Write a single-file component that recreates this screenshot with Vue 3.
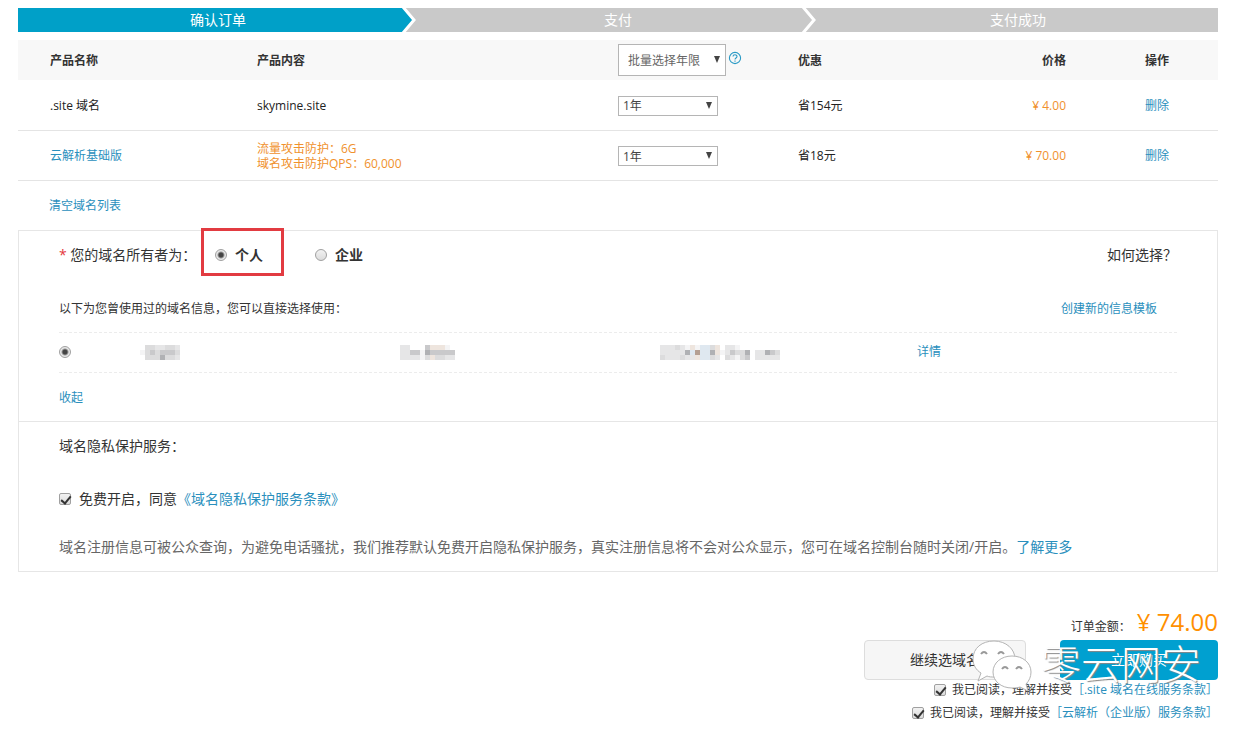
<script setup>
import { ref } from 'vue'

const steps = ['确认订单', '支付', '支付成功']
const rows = [
  { id: 'site', name: '.site 域名', lines: ['skymine.site'], save: '省154元', price: '¥ 4.00' },
  { id: 'dns', name: '云解析基础版', link: true, lines: ['流量攻击防护：6G', '域名攻击防护QPS：60,000'], save: '省18元', price: '¥ 70.00' },
]
const owner = ref('person')
const template = ref('first')
const privacy = ref(true)
const agreements = [
  { id: 'a1', label: '.site 域名在线服务条款' },
  { id: 'a2', label: '云解析（企业版）服务条款' },
]

/* Masked contact fields: rows of 5px cells, each digit picks a tone */
const levels = ['#ffffff', '#f4f4f5', '#e6e6e7', '#dcdcdd', '#c9c9cb', '#b0b1b4', '#a5a6a8', '#eee5de', '#b59f92', '#dfe8f0']
const masks = [
  { id: 'name', label: '姓名', rows: ['03322332', '13434443', '03335332'] },
  { id: 'org', label: '单位', rows: ['22000477710', '22441544444', '22221373322'] },
  { id: 'mail', label: '邮箱', rows: ['222321719937022100000000', '222225989957124335022543', '322232279932032134022222'] },
]
</script>

<template>
  <main class="page">
    <ol class="steps">
      <li v-for="(s, i) in steps" :key="s" :class="{ active: i === 0 }">
        <span>{{ s }}</span>
        <svg v-if="i < 2" class="arrow" width="18" height="24" viewBox="0 0 18 24" aria-hidden="true">
          <path class="arrow-next" d="M0 0H18V24H0Z" />
          <path class="arrow-fill" d="M0 0H4L14 12L4 24H0Z" />
          <path class="arrow-line" d="M3 -1L14 12L3 25" />
        </svg>
      </li>
    </ol>

    <table class="order">
      <colgroup><col class="c1"><col class="c2"><col class="c3"><col class="c4"><col class="c5"><col class="c6"></colgroup>
      <thead>
        <tr>
          <th>产品名称</th>
          <th>产品内容</th>
          <th class="batch-cell">
            <span class="batch">
              <span class="select tall">
                <select aria-label="批量选择年限"><option>批量选择年限</option></select>
              </span>
              <svg class="help" width="14" height="14" viewBox="0 0 14 14" aria-hidden="true">
                <circle cx="7" cy="7" r="5.6" />
                <path d="M5 5.6C5 3.2 9 3.2 9 5.5C9 7 7 7 7 8.6M7 9.6V10.8" />
              </svg>
            </span>
          </th>
          <th>优惠</th>
          <th class="price-col">价格</th>
          <th class="act">操作</th>
        </tr>
      </thead>
      <tbody>
        <tr v-for="r in rows" :key="r.id">
          <td><a v-if="r.link" href="#">{{ r.name }}</a><template v-else>{{ r.name }}</template></td>
          <td :class="{ orange: r.link }"><div v-for="l in r.lines" :key="l" class="line">{{ l }}</div></td>
          <td>
            <span class="select"><select :aria-label="r.name + ' 年限'"><option>1年</option></select></span>
          </td>
          <td>{{ r.save }}</td>
          <td class="price-col orange">{{ r.price }}</td>
          <td class="act"><a href="#">删除</a></td>
        </tr>
      </tbody>
    </table>
    <div class="clear"><a href="#">清空域名列表</a></div>

    <div class="panel">
      <section class="owner">
        <div class="owner-row">
          <span class="owner-label"><i>*</i> 您的域名所有者为：</span>
          <label class="choice marked"><input v-model="owner" type="radio" name="owner" value="person">个人</label>
          <label class="choice"><input v-model="owner" type="radio" name="owner" value="company">企业</label>
          <span class="how">如何选择？</span>
        </div>
        <div class="hint">
          <span>以下为您曾使用过的域名信息，您可以直接选择使用：</span>
          <a href="#">创建新的信息模板</a>
        </div>
        <div class="template">
          <input v-model="template" type="radio" name="template" value="first" aria-label="使用此信息模板">
          <span v-for="m in masks" :key="m.id" class="mask-cell">
            <svg role="img" :aria-label="m.label" :width="m.rows[0].length * 5" height="15" shape-rendering="crispEdges">
              <template v-for="(line, y) in m.rows" :key="y">
                <rect v-for="(c, x) in line.split('')" :key="x" :x="x * 5" :y="y * 5" width="5" height="5" :fill="levels[c]" />
              </template>
            </svg>
          </span>
          <a href="#">详情</a>
        </div>
        <a class="fold" href="#">收起</a>
      </section>
      <section class="privacy">
        <div class="privacy-title">域名隐私保护服务：</div>
        <div class="privacy-check">
          <input id="privacy" v-model="privacy" type="checkbox">
          <label for="privacy">免费开启，同意</label><a href="#">《域名隐私保护服务条款》</a>
        </div>
        <p>域名注册信息可被公众查询，为避免电话骚扰，我们推荐默认免费开启隐私保护服务，真实注册信息将不会对公众显示，您可在域名控制台随时关闭/开启。<a href="#">了解更多</a></p>
      </section>
    </div>

    <footer class="checkout">
      <div class="total"><span>订单金额：</span><strong>¥ 74.00</strong></div>
      <div class="buttons">
        <button type="button" class="more">继续选域名</button>
        <button type="button" class="buy">立即购买</button>
        <div class="watermark">
          <svg width="64" height="54" viewBox="0 0 64 54" aria-hidden="true">
            <path class="bubble" d="M22 2C10 2 1 9 1 20C1 26 4 31 9 34L6 42L15 37C17 38 20 38 22 38C34 38 43 30 43 20C43 10 34 2 22 2Z" />
            <path class="bubble" d="M40 17C29 17 21 24 21 33C21 42 29 49 40 49C43 49 45 49 48 48L56 52L54 45C57 42 59 38 59 33C59 24 51 17 40 17Z" />
            <path class="eye" d="M9 15Q12 11 15 15M26 15Q29 11 32 15M30 30Q33 26 36 30M44 30Q47 26 50 30" />
          </svg>
          <span>零云网安</span>
        </div>
      </div>
      <div v-for="a in agreements" :key="a.id" class="agree">
        <input :id="a.id" type="checkbox" checked>
        <label :for="a.id">我已阅读，理解并接受</label><a href="#">［{{ a.label }}］</a>
      </div>
    </footer>
  </main>
</template>

<style>
body { margin: 0; background: #fff; }
</style>

<style scoped>
* { box-sizing: border-box; }
.page {
  margin: 8px 23px 0 18px;
  color: #333;
  font: 12px/16px "Open Sans", "Noto Sans CJK SC", sans-serif;
}
a { color: #2a8fbd; text-decoration: none; }
.steps { display: flex; margin: 0 0 8px; padding: 0; list-style: none; height: 24px; }
.steps li {
  position: relative;
  flex: 1;
  background: #c9c9c9;
  color: #fff;
  text-align: center;
  font-size: 14px;
  line-height: 24px;
}
.steps li.active { background: #00a0c8; }
.arrow { position: absolute; top: 0; right: 0; }
.arrow-next, .arrow-fill { fill: #c9c9c9; }
.active .arrow-fill { fill: #00a0c8; }
.arrow-line { fill: none; stroke: #fff; stroke-width: 3; }

.order { width: 100%; border-collapse: collapse; table-layout: fixed; }
.c1 { width: 19%; }
.c2 { width: 31%; }
.c3 { width: 15%; }
.c4 { width: 14%; }
.c5 { width: 11%; }
.c6 { width: 10%; }
th, td { padding: 2px 0 0; text-align: left; vertical-align: middle; }
th { height: 40px; background: #f8f8f8; font-weight: 700; }
th.batch-cell { padding-top: 0; }
th:first-child, td:first-child { padding-left: 32px; }
th:nth-child(2), td:nth-child(2) { padding-left: 11px; }
td { height: 50px; border-bottom: 1px solid #e4e4e4; color: #222; }
th.price-col, td.price-col { padding-right: 32px; text-align: right; }
th.act, td.act { padding-right: 49px; text-align: right; }
td.orange { color: #f0912d; }
.line { line-height: 15px; }
.batch { display: flex; align-items: center; gap: 2px; }
.select { position: relative; display: block; width: 100px; }
.select::after {
  content: "";
  position: absolute;
  right: 6px;
  top: 50%;
  margin-top: -4px;
  border: solid transparent;
  border-width: 7px 3px 0;
  border-top-color: #444;
  pointer-events: none;
}
select {
  appearance: none;
  display: block;
  width: 100%;
  height: 20px;
  padding: 1px 4px 0;
  border: 1px solid #b5b5b5;
  border-radius: 0;
  background: #fff;
  color: #444;
  font: inherit;
}
.tall { width: 108px; }
.tall select { height: 32px; padding: 2px 9px 0; color: #666; font-weight: 400; }
.help { align-self: flex-start; margin-top: 7px; fill: none; stroke: #2a9ac5; stroke-width: 1.1; }
.clear { height: 49px; padding-left: 31px; line-height: 49px; }

input { appearance: none; flex: none; margin: 0; width: 12px; height: 12px; border: 1px solid #a0a0a0; background: linear-gradient(#f2f2f2, #dcdcdc); }
input[type="radio"] { border-radius: 50%; }
input[type="radio"]:checked { background: radial-gradient(circle, #444 0 2px, #e8e8e8 4px); }
input[type="checkbox"] { position: relative; border-radius: 2px; }
input[type="checkbox"]:checked::after {
  content: "";
  position: absolute;
  left: 3px;
  top: 0;
  width: 4px;
  height: 8px;
  border: solid #333;
  border-width: 0 2px 2px 0;
  transform: rotate(40deg);
}

.panel { border: 1px solid #e6e6e6; }
.owner { height: 190px; padding: 0 40px; }
.owner-row { display: flex; align-items: center; height: 48px; font-size: 14px; }
.owner-label { width: 142px; }
.owner-label i { color: #e4393c; font-style: normal; }
.choice { display: flex; align-items: center; gap: 8px; width: 83px; height: 48px; padding-left: 11px; border: 3px solid transparent; font-weight: 700; }
.choice + .choice { margin-left: 17px; }
.marked { padding-top: 6px; border-color: #e23b41; align-self: flex-start; margin-top: -3px; }
.how { margin-left: auto; }
.hint { display: flex; justify-content: space-between; align-items: center; height: 53px; padding: 8px 20px 0 0; }
.template {
  display: grid;
  grid-template-columns: 81fr 260fr 260fr 257fr 260fr;
  align-items: center;
  height: 41px;
  border: dashed #ececec;
  border-width: 1px 0;
}
.mask-cell svg { display: block; }
.fold { display: block; height: 50px; line-height: 50px; }
.privacy { height: 150px; padding: 0 40px; border-top: 1px solid #e6e6e6; font-size: 14px; }
.privacy-title { height: 49px; line-height: 48px; }
.privacy-check { display: flex; align-items: center; height: 56px; }
.privacy-check label { margin-left: 8px; }
.privacy p { margin: 0; line-height: 40px; color: #666; }

.checkout { display: flex; flex-direction: column; align-items: flex-end; margin-top: 34px; }
.total { display: flex; align-items: baseline; gap: 6px; height: 34px; }
.total strong { color: #ff9000; font-size: 24px; line-height: 32px; font-weight: 400; }
.buttons { position: relative; display: flex; gap: 34px; }
button { height: 40px; border: 0; border-radius: 4px; padding: 0; font: inherit; font-size: 14px; }
.more { width: 162px; border: 1px solid #ddd; background: #f6f6f6; color: #333; }
.buy { width: 158px; background: #00a0d0; color: #fff; }
.watermark { position: absolute; right: 17px; top: -1px; display: flex; align-items: flex-start; gap: 5px; pointer-events: none; }
.watermark span { color: #fff; font-size: 40px; line-height: 50px; font-weight: 300; text-shadow: 1px 1px 1px #888; }
.bubble { fill: #fff; stroke: #b4b4b4; stroke-width: 1; }
.eye { fill: none; stroke: #999; stroke-width: 2; }
.agree { display: flex; align-items: center; height: 23px; }
.buttons + .agree { margin-top: -1px; }
.agree label { margin-left: 6px; }
</style>
